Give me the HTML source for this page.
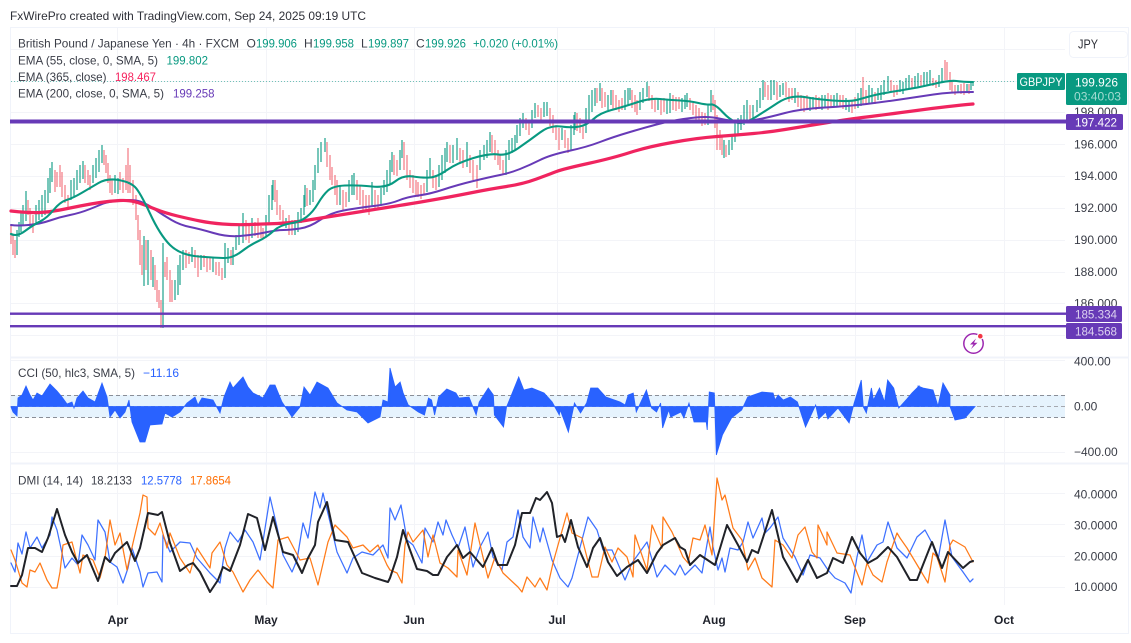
<!DOCTYPE html>
<html><head><meta charset="utf-8"><title>GBPJPY</title>
<style>
html,body{margin:0;padding:0;background:#fff;width:1131px;height:643px;overflow:hidden}
svg{display:block;filter:blur(.3px)}
text{font-family:"Liberation Sans",sans-serif;font-size:12px;fill:#3a3d47}
.g{fill:none;stroke:#089981;stroke-width:1.25;opacity:.88}
.r{fill:none;stroke:#ef4b5a;stroke-width:1.25;opacity:.72}
.ax{fill:#3a3d47}
.t{font-weight:bold;fill:#1f222b;text-anchor:middle}
.l{fill:none;stroke-linejoin:round;stroke-linecap:round}
</style></head><body>
<svg width="1131" height="643" viewBox="0 0 1131 643" xmlns="http://www.w3.org/2000/svg">
<rect width="1131" height="643" fill="#fff"/>
<text x="10" y="20" textLength="356" lengthAdjust="spacingAndGlyphs" style="fill:#2e3038">FxWirePro created with TradingView.com, Sep 24, 2025 09:19 UTC</text>
<rect x="10.5" y="27.5" width="1118" height="606" fill="none" stroke="#f0f3fa"/>
<!-- grid -->
<path d="M11 49.5H1065M11 81.5H1065M11 112.5H1065M11 144.5H1065M11 176.5H1065M11 208.5H1065M11 240.5H1065M11 272.5H1065M11 303.5H1065M11 335.5H1065M11 360.5H1065M11 452.5H1065M11 493.5H1065M11 524.5H1065M11 556.5H1065M11 587.5H1065M117.5 28V605M266.5 28V605M414.5 28V605M557.5 28V605M714.5 28V605M855.5 28V605M1004.5 28V605" stroke="#f3f4f8" fill="none"/>
<path d="M10 357.5H1129M10 463.5H1129" stroke="#f0f3fa" stroke-width="2" fill="none"/>
<!-- last price dotted -->
<path d="M11 81.5H1016" stroke="#089981" stroke-dasharray="1 2" opacity=".55" fill="none"/>
<!-- candles -->
<path class="r" d="M11 226v18M13 235v20M15 240v18M28 200v15M30 208v20M33 215v18M55 170v22M57 172v15M60 165v22M62 172v25M65 185v18M68 195v15M85 165v18M88 170v15M90 175v15M104 150v15M106 155v18M108 163v20M110 175v18M112 180v15M120 172v18M123 178v15M126 165v25M128 148v45M130 165v28M133 180v25M136 195v25M138 215v25M140 230v35M142 245v30M146 240v30M151 250v30M155 265v25M157 280v22M159 290v18M161 300v28M165 262v15M167 257v23M170 270v32M172 280v22M186 250v18M189 252v12M195 250v18M198 255v22M204 255v12M207 257v15M210 258v12M216 262v13M219 262v14M222 268v12M231 250v15M246 220v20M249 225v18M255 222v14M258 218v20M261 226v12M263 228v10M275 180v22M277 190v25M280 205v15M283 210v14M289 215v20M292 220v15M307 188v18M327 142v25M330 155v25M332 167v18M335 175v20M337 180v25M343 190v20M346 192v15M357 180v20M360 185v20M363 190v20M366 195v15M369 195v20M375 190v20M378 195v15M394 155v20M397 160v16M404 142v28M407 155v25M410 170v18M413 175v18M416 180v15M418 182v15M421 185v14M424 183v12M433 170v18M436 175v15M450 145v18M460 148v15M463 150v18M470 155v18M473 160v20M477 165v23M492 135v18M495 140v20M498 150v15M500 155v15M503 160v15M526 118v12M529 120v15M538 105v12M541 108v14M550 108v18M553 115v18M556 125v15M559 128v22M565 130v18M568 138v15M577 113v18M580 118v15M583 125v14M597 88v15M602 88v20M605 92v15M613 90v20M616 95v15M619 100v12M622 98v12M632 90v18M635 95v17M637 100v15M649 86v15M652 95v14M655 100v12M661 100v15M664 98v14M673 95v15M676 97v14M679 97v12M690 98v12M693 103v12M696 105v15M699 108v12M702 112v14M705 113v12M713 95v15M715 100v28M717 115v35M720 130v20M722 135v20M726 145v12M750 105v15M765 82v15M768 85v15M777 82v18M786 82v15M789 88v14M792 88v12M798 92v15M801 95v14M804 98v14M807 95v15M816 95v15M819 97v12M828 93v17M831 95v12M840 95v12M843 95v14M852 100v13M855 97v12M863 77v28M866 90v15M875 92v12M891 80v12M894 85v12M897 85v10M912 78v10M921 75v12M933 78v8M936 80v8M945 60v20M947 62v18M950 72v18M952 80v12M955 85v10M961 84v10M964 83v12M969 84v10"/>
<path class="g" d="M17 230v25M19 222v15M21 212v20M23 205v20M26 191v30M36 205v20M39 200v20M42 195v22M45 190v25M48 178v25M50 168v25M52 162v20M71 180v20M74 178v18M77 170v20M80 165v18M83 161v18M93 165v18M96 158v20M99 150v22M102 145v18M115 175v18M118 178v16M144 236v50M148 240v45M153 257v30M163 243v85M175 280v20M178 265v30M180 255v30M183 250v20M192 247v15M201 255v15M213 257v15M225 243v35M228 248v15M233 247v18M236 235v15M239 225v20M243 213v30M252 218v20M266 215v22M269 195v30M272 185v25M273 180v20M286 218v10M295 220v15M298 212v20M301 208v15M304 195v20M305 185v22M310 190v15M313 180v22M315 165v25M318 148v25M321 142v20M325 138v14M340 185v20M349 180v22M352 175v20M354 173v22M372 182v25M381 188v18M384 180v15M387 170v22M390 160v25M392 152v20M400 150v20M402 140v18M427 170v22M430 158v20M439 165v22M442 155v25M445 148v25M447 142v20M453 145v18M457 138v22M467 142v25M480 150v20M484 145v15M487 140v18M490 132v20M506 150v25M509 140v20M512 138v15M515 135v15M517 125v18M520 118v18M523 113v15M532 110v18M535 103v15M544 102v15M547 102v14M562 128v12M571 125v25M574 115v20M575 112v18M586 108v25M589 95v25M592 90v22M595 88v18M600 83v18M608 95v15M611 90v15M625 90v20M628 88v18M630 88v12M640 92v18M643 88v15M647 82v15M658 98v12M667 100v14M670 93v20M682 98v14M685 95v14M687 93v14M708 105v20M711 90v22M724 140v18M729 140v15M732 135v15M735 120v22M738 118v18M741 115v15M744 105v20M747 100v20M753 105v15M757 100v12M760 88v20M763 80v20M771 80v20M774 80v15M780 85v12M783 83v12M795 88v15M810 97v14M813 97v12M822 95v15M825 95v12M834 95v12M837 93v14M846 98v12M849 100v12M858 93v15M861 88v18M869 85v18M872 88v15M878 88v12M881 85v15M884 80v15M888 76v15M900 80v12M903 82v12M906 78v12M909 75v14M915 76v12M918 73v14M924 72v15M927 72v14M930 70v15M939 75v12M942 68v15M958 85v8M967 84v8M971 83v7M973 81v5"/>
<!-- EMA 200 -->
<path class="l" stroke="#673ab7" stroke-width="2" d="M11 225Q17 226 28.5 225Q40 224 50 220.5Q60 217 70 215Q80 213 90 209Q100 205 103.5 203.5Q107 202 120 200.5Q133 199 140 201.5Q147 204 155 209.5Q163 215 171.5 220Q180 225 190 227Q200 229 213.5 233Q227 237 240 236Q253 235 265 232.5Q277 230 283.5 230Q290 230 300 228.5Q310 227 320 220Q330 213 343.5 210.5Q357 208 373.5 206Q390 204 398.5 200.5Q407 197 418.5 195.5Q430 194 443.5 189.5Q457 185 473.5 181Q490 177 500 175Q510 173 520 169Q530 165 540 160Q550 155 568.5 151Q587 147 600 142Q613 137 630 132Q647 127 658.5 124Q670 121 683.5 119Q697 117 705 117Q713 117 721.5 119Q730 121 740 121Q750 121 760 119Q770 117 785 113Q800 109 825 107.5Q850 106 866.5 104Q883 102 900 99.5Q917 97 933.5 94.5Q950 92 973 92"/>
<!-- EMA 365 -->
<path class="l" stroke="#f0245f" stroke-width="3.2" d="M11 211Q30 213 40 212.5Q50 212 60 210Q70 208 80 206Q90 204 100 202.5Q110 201 120 200.5Q130 200 137.5 202.5Q145 205 155 209Q165 213 177.5 216Q190 219 200 221Q210 223 222.5 224Q235 225 250 224.5Q265 224 277.5 223.5Q290 223 311.5 219.5Q333 216 368 210.5Q403 205 426.5 201Q450 197 470 193Q490 189 506.5 186.5Q523 184 536.5 179Q550 174 556.5 171.5Q563 169 588 163.5Q613 158 630 152.5Q647 147 672 142.5Q697 138 717 136.5Q737 135 753.5 133.5Q770 132 785 129.5Q800 127 825 123Q850 119 866.5 117Q883 115 916.5 110.5Q950 106 973 104"/>
<!-- EMA 55 -->
<path class="l" stroke="#089981" stroke-width="2.1" d="M11 234Q17 237 25 231Q33 225 40 221.5Q47 218 53.5 210Q60 202 66.5 200Q73 198 81.5 193Q90 188 98.5 183Q107 178 118.5 180Q130 182 135 187Q140 192 150 213.5Q160 235 170 245Q180 255 198.5 256.5Q217 258 225 258Q233 258 241.5 251.5Q250 245 258.5 241Q267 237 273.5 231Q280 225 290 223.5Q300 222 306.5 217Q313 212 318 203.5Q323 195 328 190.5Q333 186 345 185.5Q357 185 372 186.5Q387 188 395 181.5Q403 175 413 176.5Q423 178 430 177.5Q437 177 447 170Q457 163 473.5 158Q490 153 498.5 154.5Q507 156 518.5 148Q530 140 540 132.5Q550 125 561 126.5Q572 128 579.5 126.5Q587 125 593.5 119Q600 113 611.5 110Q623 107 636.5 102.5Q650 98 660 99Q670 100 680 100.5Q690 101 698.5 103Q707 105 711 104.5Q715 104 722.5 112Q730 120 736.5 122.5Q743 125 756.5 116.5Q770 108 777.5 103Q785 98 792.5 97Q800 96 807.5 97.5Q815 99 832.5 100.5Q850 102 858.5 99.5Q867 97 875 95Q883 93 900 90.5Q917 88 933.5 84Q950 80 956.5 81Q963 82 973 82"/>
<!-- horizontal levels -->
<rect x="10" y="119.5" width="1056" height="4" fill="#673ab7"/>
<rect x="10" y="312.5" width="1056" height="2.4" fill="#673ab7"/>
<rect x="10" y="325" width="1056" height="2.4" fill="#673ab7"/>
<!-- legend -->
<text x="18" y="47.5" textLength="221" lengthAdjust="spacingAndGlyphs">British Pound / Japanese Yen · 4h · FXCM</text>
<text x="246.5" y="47.5">O</text><text x="256" y="47.5" textLength="41" lengthAdjust="spacingAndGlyphs" style="fill:#089981">199.906</text>
<text x="304" y="47.5">H</text><text x="313" y="47.5" textLength="41" lengthAdjust="spacingAndGlyphs" style="fill:#089981">199.958</text>
<text x="361" y="47.5">L</text><text x="368" y="47.5" textLength="41" lengthAdjust="spacingAndGlyphs" style="fill:#089981">199.897</text>
<text x="416" y="47.5">C</text><text x="425" y="47.5" textLength="41" lengthAdjust="spacingAndGlyphs" style="fill:#089981">199.926</text>
<text x="473" y="47.5" textLength="85" lengthAdjust="spacingAndGlyphs" style="fill:#089981">+0.020 (+0.01%)</text>
<text x="18" y="64.5" textLength="140" lengthAdjust="spacingAndGlyphs">EMA (55, close, 0, SMA, 5)</text>
<text x="166.5" y="64.5" textLength="41.5" lengthAdjust="spacingAndGlyphs" style="fill:#089981">199.802</text>
<text x="18" y="81" textLength="88.5" lengthAdjust="spacingAndGlyphs">EMA (365, close)</text>
<text x="115" y="81" textLength="41" lengthAdjust="spacingAndGlyphs" style="fill:#f7245f">198.467</text>
<text x="18" y="97.5" textLength="146" lengthAdjust="spacingAndGlyphs">EMA (200, close, 0, SMA, 5)</text>
<text x="173" y="97.5" textLength="41.5" lengthAdjust="spacingAndGlyphs" style="fill:#673ab7">199.258</text>
<!-- right axis -->
<rect x="1069.5" y="31.5" width="58" height="26" rx="4" fill="#fff" stroke="#f0f3fa"/>
<text x="1078" y="48.5" textLength="20" lengthAdjust="spacingAndGlyphs" style="font-size:13px;fill:#2e3038">JPY</text>
<text class="ax" x="1074" y="116">198.000</text>
<text class="ax" x="1074" y="148.5">196.000</text>
<text class="ax" x="1074" y="180">194.000</text>
<text class="ax" x="1074" y="212">192.000</text>
<text class="ax" x="1074" y="244">190.000</text>
<text class="ax" x="1074" y="276">188.000</text>
<text class="ax" x="1074" y="307.5">186.000</text>
<rect x="1017" y="73" width="48" height="17" rx="1.5" fill="#089981"/>
<text x="1019.5" y="86" textLength="43" lengthAdjust="spacingAndGlyphs" style="fill:#fff">GBPJPY</text>
<rect x="1066" y="73" width="61" height="32" rx="1.5" fill="#089981"/>
<text x="1075" y="86.5" textLength="43" lengthAdjust="spacingAndGlyphs" style="fill:#fff">199.926</text>
<text x="1074" y="100.5" textLength="47" lengthAdjust="spacingAndGlyphs" style="fill:#a5dcd2">03:40:03</text>
<rect x="1066" y="114" width="57" height="16" rx="1.5" fill="#673ab7"/>
<text x="1075" y="126.5" textLength="42" lengthAdjust="spacingAndGlyphs" style="fill:#fff">197.422</text>
<rect x="1066" y="306" width="56" height="16" rx="1.5" fill="#673ab7"/>
<text x="1075" y="318.5" textLength="42" lengthAdjust="spacingAndGlyphs" style="fill:#ddd3f0">185.334</text>
<rect x="1066" y="323" width="56" height="16" rx="1.5" fill="#673ab7"/>
<text x="1075" y="335.5" textLength="42" lengthAdjust="spacingAndGlyphs" style="fill:#ddd3f0">184.568</text>
<!-- icon -->
<circle cx="973.5" cy="343.5" r="9.7" fill="#fff" stroke="#9c27b0" stroke-width="1.5"/>
<path d="M976 338.5L970 344.5H973.5L971 349L977.5 342.8H974Z" fill="#9c27b0"/>
<circle cx="980.3" cy="336.2" r="3.4" fill="#fff"/><circle cx="980.3" cy="336.2" r="2.3" fill="#f23645"/>
<!-- CCI -->
<rect x="11" y="395" width="1054" height="22.5" fill="#e6f3fd"/>
<path d="M11 395.5H1065M11 417.5H1065" stroke="#8a8e97" stroke-dasharray="4 3" fill="none"/>
<path d="M11 406.5H1065" stroke="#a6a9b0" stroke-dasharray="4 3" fill="none"/>
<polygon fill="#2962ff" stroke="#2962ff" stroke-width=".8" points="11,407 13,412 17,416 18,398 22,395 26,386 30,395 33,400 37,393 42,396 50,384 57,391 62,397 67,404 72,402 74,408 77,398 83,391 88,398 95,402 102,383 107,397 110,417 115,410 120,418 125,412 129,400 132,422 140,442 145,442 150,425 162,424 165,413 172,417 180,412 187,403 195,397 198,405 202,398 213,400 220,413 224,397 230,382 233,388 243,377 248,387 253,393 263,398 270,385 275,385 282,402 292,417 300,407 304,387 310,395 317,382 328,388 337,403 347,410 357,412 368,423 380,417 383,400 388,402 390,368 390,406.5 11,406.5"/>
<polygon transform="translate(390 0) scale(1.0135 1) translate(-390 0)" fill="#2962ff" stroke="#2962ff" stroke-width=".8" points="390,368 395,387 400,382 403,393 408,405 418,412 424,415 428,398 431,400 434,415 438,397 446,389 455,393 458,398 468,397 475,415 478,402 487,388 492,395 493,415 502,427 505,407 517,377 522,390 530,388 542,393 550,402 557,415 558,410 566,432 572,403 578,413 584,403 588,388 595,388 603,397 617,402 622,405 625,395 630,393 633,412 643,390 648,408 653,412 657,403 659,428 665,410 667,417 677,412 680,418 685,403 690,422 702,422 703,430 705,392 710,393 712,455 718,435 727,418 737,410 743,397 757,392 768,393 770,400 773,395 778,400 785,397 792,402 800,427 810,405 813,419 820,412 822,419 832,408 843,423 848,403 855,380 857,407 860,413 865,388 867,400 873,388 878,402 881,380 887,388 892,408 900,399 905,393 912,386 912,406.5 390,406.5"/>
<polygon fill="#2962ff" stroke="#2962ff" stroke-width=".8" points="918,386 923,388 933,390 938,406 943,383 950,395 950,406.5 955,420 965,418 975,406.5 918,406.5"/>
<text x="18" y="377" textLength="117" lengthAdjust="spacingAndGlyphs">CCI (50, hlc3, SMA, 5)</text>
<text x="143" y="377" textLength="36" lengthAdjust="spacingAndGlyphs" style="fill:#2962ff">−11.16</text>
<text class="ax" x="1074" y="365.5">400.00</text>
<text class="ax" x="1074" y="410.5">0.00</text>
<text class="ax" x="1074" y="456">−400.00</text>
<!-- DMI -->
<polyline class="l" stroke="#2962ff" stroke-width="1.25" opacity=".9" points="11,563 15,572 18,543 22,554 26,532 30,548 37,537 42,548 50,535 52,517 57,530 62,553 65,568 72,558 78,565 82,535 88,545 95,560 98,520 105,532 110,562 117,567 123,583 128,568 132,548 140,572 143,587 148,573 157,572 162,582 163,535 170,552 180,542 190,543 197,558 210,573 220,583 225,548 230,532 238,542 245,530 253,542 260,560 270,497 277,527 283,555 292,572 297,560 303,523 308,538 315,492 320,508 323,493 330,522 337,552 347,573 353,558 362,552 373,555 383,545 388,558 390,508 395,520 401,505 407,540 413,545 422,563 425,528 433,542 438,522 443,535 446,520 452,535 458,548 465,527 473,567 480,547 488,532 493,557 502,570 507,542 513,537 518,510 523,537 530,548 533,517 540,542 543,528 552,560 560,578 568,587 572,578 588,517 597,530 603,550 612,550 625,580 632,563 647,542 657,577 665,565 675,575 680,565 685,575 695,565 702,573 710,527 713,547 718,570 722,558 725,572 730,548 738,550 743,542 748,522 753,538 762,518 765,533 770,528 778,517 783,538 795,557 803,575 810,555 820,558 828,570 835,578 845,583 851,593 857,557 862,535 867,562 877,545 883,542 888,522 897,548 907,558 917,537 925,530 932,543 938,560 945,520 952,557 963,572 970,582 973,579"/>
<polyline class="l" stroke="#ff6d00" stroke-width="1.25" opacity=".9" points="11,550 15,560 22,583 27,587 30,570 35,572 40,563 47,580 52,588 57,588 60,572 63,545 72,542 80,573 83,555 93,560 100,578 105,558 110,520 115,545 120,533 127,570 133,543 140,513 143,495 147,497 148,528 155,535 160,523 167,548 170,533 180,558 190,573 197,548 210,568 212,553 220,542 227,565 233,572 243,592 250,580 258,570 267,582 273,588 278,540 288,537 300,560 310,558 318,585 328,542 335,525 347,537 353,548 363,545 370,552 378,545 387,565 390,570 397,573 402,583 405,545 408,532 413,542 423,530 428,557 433,535 440,563 448,568 457,577 458,550 467,575 475,523 482,553 488,578 495,557 503,573 518,587 522,592 527,577 535,587 540,578 547,590 553,563 567,513 572,533 582,538 592,577 598,577 605,547 612,562 618,548 627,557 633,577 635,535 647,570 652,525 662,548 663,517 672,532 680,550 683,557 688,563 693,538 700,540 705,525 712,555 717,478 722,500 725,495 733,528 742,540 748,570 755,558 762,578 772,587 775,540 783,545 792,558 798,535 805,527 812,552 817,558 818,525 827,545 827,532 837,553 850,555 862,585 867,563 873,575 882,582 887,562 897,533 900,538 907,548 913,558 928,583 933,553 937,557 945,582 950,545 953,540 965,547 973,562"/>
<polyline class="l" stroke="#202228" stroke-width="2" points="11,586 17,586 22,575 28,548 35,548 42,552 48,538 57,509 65,535 72,552 78,563 87,555 98,581 105,557 110,562 115,553 127,542 135,561 140,548 148,513 158,515 162,512 170,543 180,571 188,565 193,563 200,572 210,592 218,580 223,567 230,571 240,545 248,514 257,518 265,550 273,517 283,552 293,555 302,573 308,558 315,545 318,522 327,502 335,540 348,542 362,573 375,578 388,582 390,578 397,557 403,530 410,550 417,569 427,571 433,575 438,575 447,557 457,545 463,558 470,552 483,567 492,548 498,565 507,565 515,545 522,513 530,513 536,498 540,500 547,492 552,503 557,537 562,535 565,542 571,520 578,547 587,567 593,548 600,538 608,562 617,576 627,567 638,560 647,573 657,553 663,545 675,538 680,547 685,550 690,565 700,555 715,565 727,525 738,545 747,562 752,550 758,553 772,510 783,557 797,582 808,560 817,578 827,573 833,558 843,563 852,537 860,553 868,563 877,558 888,547 897,557 910,580 917,580 932,542 942,568 948,552 963,568 970,562 973,561"/>
<text x="18" y="484.5" textLength="65" lengthAdjust="spacingAndGlyphs">DMI (14, 14)</text>
<text x="91" y="484.5" textLength="41" lengthAdjust="spacingAndGlyphs">18.2133</text>
<text x="141" y="484.5" textLength="41" lengthAdjust="spacingAndGlyphs" style="fill:#2962ff">12.5778</text>
<text x="190" y="484.5" textLength="41" lengthAdjust="spacingAndGlyphs" style="fill:#ff6d00">17.8654</text>
<text class="ax" x="1074" y="498.5">40.0000</text>
<text class="ax" x="1074" y="529.5">30.0000</text>
<text class="ax" x="1074" y="560.5">20.0000</text>
<text class="ax" x="1074" y="591">10.0000</text>
<!-- time axis -->
<text class="t" x="118" y="624">Apr</text>
<text class="t" x="266" y="624">May</text>
<text class="t" x="414" y="624">Jun</text>
<text class="t" x="557" y="624">Jul</text>
<text class="t" x="714" y="624">Aug</text>
<text class="t" x="855" y="624">Sep</text>
<text class="t" x="1004" y="624">Oct</text>
</svg>
</body></html>
